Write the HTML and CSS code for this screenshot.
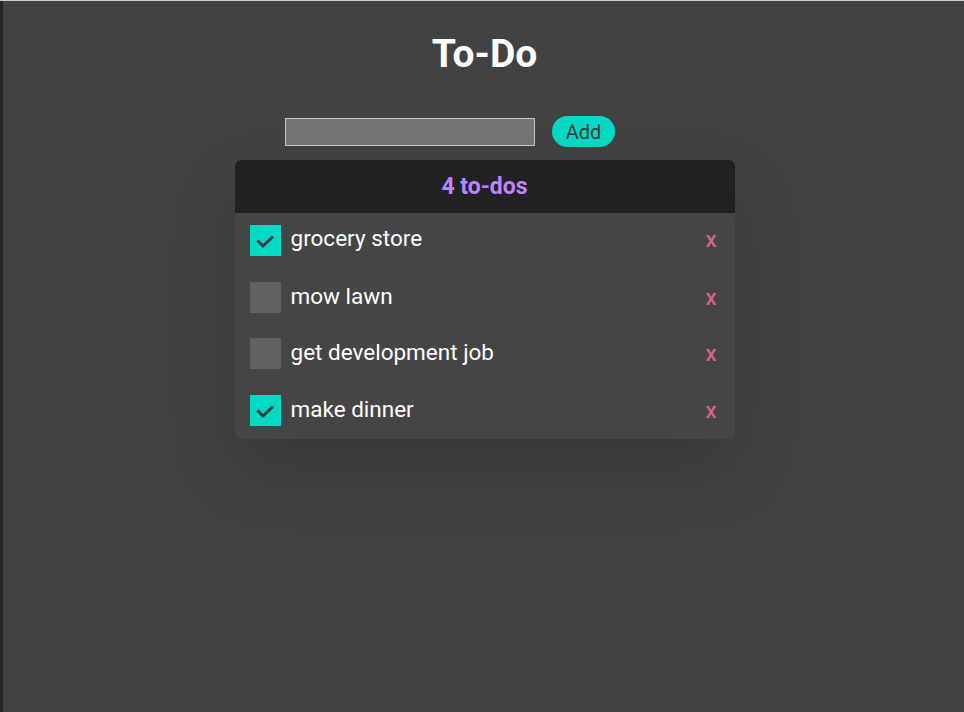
FILE: index.html
```html
<!DOCTYPE html>
<html>
<head>
<meta charset="utf-8">
<link rel="stylesheet" href="styles.css">
</head>
<body>
<div class="frame">
  <div class="side-strip"></div>
  <main class="app">
    <h1 class="title">To-Do</h1>
    <form class="add-form">
      <input class="add-input" type="text">
      <button class="add-btn" type="button">Add</button>
    </form>
    <section class="card">
      <header class="card-head">4 to-dos</header>
      <ul class="list">
        <li class="item"><span class="check on"><svg viewBox="0 0 31 31" width="31" height="31"><path d="M7.5 15.5l5.5 5.5 10-9.5" fill="none" stroke="#383838" stroke-width="3"/></svg></span><span class="label">grocery store</span><span class="del">x</span></li>
        <li class="item"><span class="check"></span><span class="label">mow lawn</span><span class="del">x</span></li>
        <li class="item"><span class="check"></span><span class="label">get development job</span><span class="del">x</span></li>
        <li class="item"><span class="check on"><svg viewBox="0 0 31 31" width="31" height="31"><path d="M7.5 15.5l5.5 5.5 10-9.5" fill="none" stroke="#383838" stroke-width="3"/></svg></span><span class="label">make dinner</span><span class="del">x</span></li>
      </ul>
    </section>
  </main>
</div>
</body>
</html>
```

FILE: styles.css
```css
html, body {
  margin: 0;
  padding: 0;
  height: 100%;
}
body {
  background: #424242;
  font-family: Roboto, "Liberation Sans", sans-serif;
  color: #fff;
  overflow: hidden;
}
.frame {
  display: flex;
  height: 100%;
  border-top: 1px solid #cfcfcf;
  box-sizing: border-box;
}
.side-strip {
  width: 3px;
  flex: none;
  background: #252526;
}
.app {
  flex: 1;
  display: flex;
  flex-direction: column;
  align-items: center;
  background: #424242;
  padding-left: 2px;
}
.title {
  margin: 27px 0 0;
  font-size: 39px;
  line-height: 52px;
  font-weight: 700;
  color: #fff;
}
.add-form {
  display: flex;
  align-items: center;
  gap: 17px;
  margin-top: 36px;
  margin-right: 69px;
}
.add-input {
  width: 250px;
  height: 28px;
  box-sizing: border-box;
  background: #757575;
  border: 1px solid #c8c8c8;
  margin: 0;
  padding: 0;
}
.add-btn {
  width: 63px;
  height: 31px;
  border: none;
  border-radius: 16px;
  background: #03dac5;
  color: #3a3a3a;
  font-family: Roboto, "Liberation Sans", sans-serif;
  font-size: 20px;
  padding: 0;
}
.card {
  margin-top: 13px;
  width: 500px;
  border-radius: 6px;
  background: #454545;
  box-shadow: 0 30px 70px rgba(0, 0, 0, 0.16);
  overflow: hidden;
}
.card-head {
  height: 53px;
  background: #212121;
  display: flex;
  align-items: center;
  justify-content: center;
  color: #bb86fc;
  font-size: 23px;
  font-weight: 700;
}
.list {
  list-style: none;
  margin: 0;
  padding: 12px 0 0;
}
.item {
  display: flex;
  align-items: center;
  height: 56.5px;
  padding: 0 18px 0 15px;
}
.item:first-child { height: 44px; align-items: flex-start; }
.check {
  width: 31px;
  height: 31px;
  flex: none;
  background: #616161;
  display: block;
}
.check.on { background: #03dac5; }
.check svg { display: block; }
.label {
  margin-left: 10px;
  margin-bottom: 3px;
  font-size: 22.5px;
  flex: 1;
  color: #fff;
}
.item:first-child .label { margin-top: -1px; line-height: 28px; }
.del {
  color: #cf6679;
  font-size: 22px;
  font-weight: 500;
}
.item:first-child .del { margin-top: 2px; }
```
